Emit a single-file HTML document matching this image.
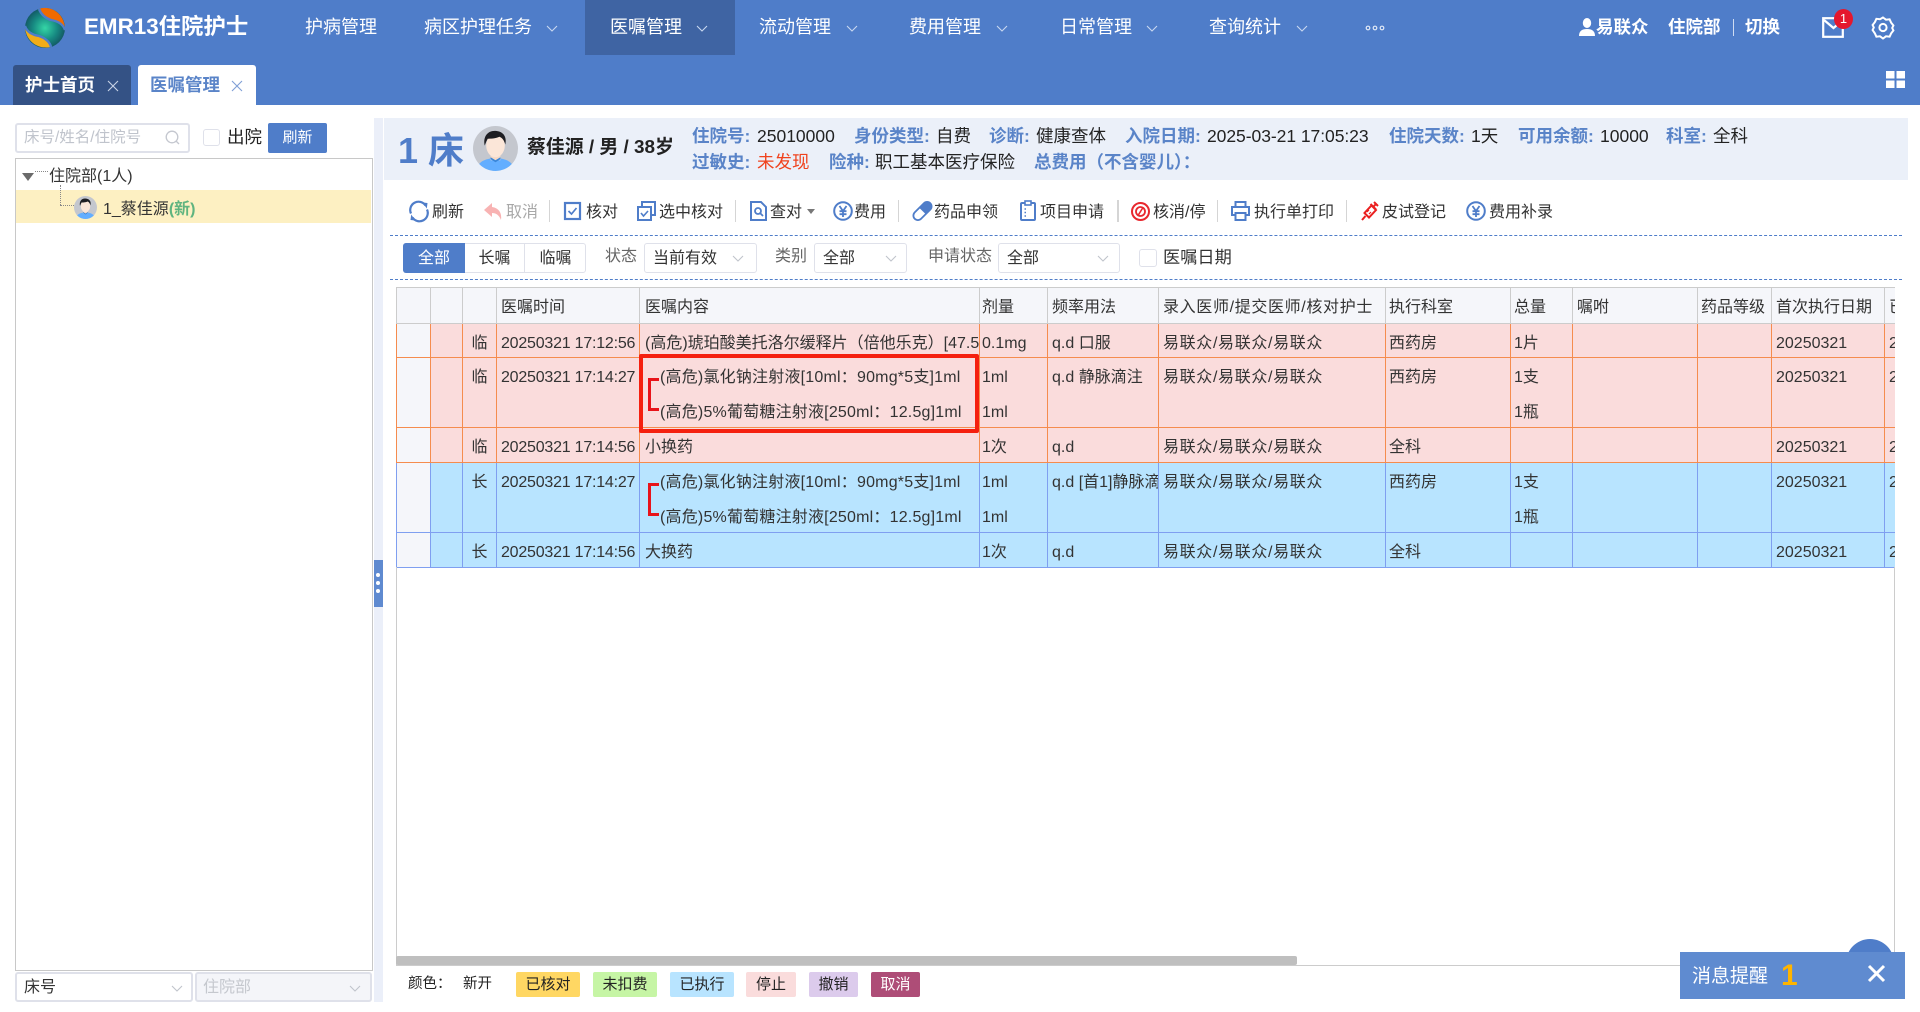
<!DOCTYPE html>
<html lang="zh-CN"><head><meta charset="utf-8"><title>EMR13住院护士 - 医嘱管理</title>
<style>
*{box-sizing:border-box}
html,body{margin:0;padding:0;width:1920px;height:1012px;overflow:hidden;background:#fff}
body{position:relative;font-family:"Liberation Sans","Noto Sans CJK SC",sans-serif;color:#333;font-size:16px}
.a{position:absolute}
.t{position:absolute;white-space:nowrap;line-height:20px;height:20px}
.i{position:absolute;overflow:visible}
.hdr{left:0;top:0;width:1920px;height:105px;background:#4f7dc9}
.nav{color:#fff;font-size:18px;top:17px}
.chev{position:absolute;width:12px;height:7px;color:#c9d8f0}
.sel{color:#c0c4cc}
.b{font-weight:bold}
.lab{font-weight:bold;color:#5a84c8;font-size:17.5px}
.val{color:#222;font-size:17.5px}
.tb{font-size:16px;color:#333;top:203px}
.dv{position:absolute;width:1px;height:22px;top:200px;background:#d5d5d5}
.box{position:absolute;border:1px solid #dfe1ea;border-radius:3px;background:#fff}
.dash{position:absolute;left:390px;width:1512px;height:0;border-top:1px dashed #4f7dc9}
#tw{position:absolute;left:396px;top:287px;width:1499px;height:282px;overflow:hidden}
table{border-collapse:collapse;table-layout:fixed;width:1499px;font-size:16px;color:#333}
th,td{padding:0 0 0 4px;overflow:hidden;white-space:nowrap;text-align:left;font-weight:normal;vertical-align:top}
th{height:36px;background:#f5f6fa;border:1px solid #ccc;line-height:40px}
th div{height:0;position:relative}
td div{height:0;line-height:35px;position:relative;top:2px}
td div.l2{top:37px}
th:nth-child(5),td:nth-child(5){padding-left:5px}
th:nth-child(6),td:nth-child(6){padding-left:2px}
th:nth-child(8),td:nth-child(8){letter-spacing:.65px}
th:nth-child(9),td:nth-child(9),th:nth-child(10),td:nth-child(10),th:nth-child(12),td:nth-child(12){padding-left:3px}
td.c{text-align:center;padding:0}
td.g{padding-left:20px;position:relative;letter-spacing:.2px}
td.f{background:#f5f6fa}
tr.p td{background:#fadcdc;border:1px solid #f58c4e}
tr.b1 td{background:#b8e4ff;border:1px solid #7f9ff0}
tr.p td.f,tr.b1 td.f{background:#f5f6fa}
.ts{letter-spacing:-.22px}
.br{position:absolute;left:8px;top:20px;width:11px;height:33px;border:3px solid #e8131a;border-right:none}
.lg{position:absolute;top:972px;height:25px;line-height:25px;text-align:center;font-size:15px;color:#222;border-radius:2px}
</style></head><body>
<svg width="0" height="0" style="position:absolute"><defs>
<symbol id="chev" viewBox="0 0 12 7"><polyline points="1,1 6,6 11,1" fill="none" stroke="currentColor" stroke-width="1.1"/></symbol>
<symbol id="yen" viewBox="0 0 20 20"><circle cx="10" cy="10" r="8.8" fill="none" stroke="#4f7dc9" stroke-width="2"/><path d="M6.500 5l3.500 5 3.500-5M6.500 10.200h7M6.500 13.200h7M10 10v6" fill="none" stroke="#4f7dc9" stroke-width="1.800"/></symbol>
<symbol id="av" viewBox="0 0 46 46"><clipPath id="cp"><circle cx="23" cy="23" r="23"/></clipPath><g clip-path="url(#cp)"><rect width="46" height="46" fill="#c4c7ce"/><path d="M4 46c0-9 8-13 19-13s19 4 19 13z" fill="#63aeff"/><rect x="18" y="26" width="10" height="9" fill="#f5d9c6"/><path d="M18 32l5 3 5-3v2l-5 3-5-3z" fill="#3a86d8"/><ellipse cx="23" cy="20" rx="9.500" ry="12" fill="#fbe6d8"/><path d="M12 20c-2-9 3-15 10-15 8 0 13 5 11 14-1-4-3-7-6-8-4 2-10 2-12 2-1 2-2 4-3 7z" fill="#1e1e22"/></g></symbol>
<radialGradient id="lg1" cx="50%" cy="50%" r="55%"><stop offset="0" stop-color="#35d6a6"/><stop offset=".55" stop-color="#178a82"/><stop offset="1" stop-color="#124f5e"/></radialGradient>
</defs></svg>

<div class="a hdr"></div>
<svg class="i" style="left:25px;top:8px" width="40" height="40" viewBox="0 0 40 40">
<circle cx="20" cy="20" r="20" fill="url(#lg1)"/>
<path d="M14 1C24-3 40 4 40 22 38 16 32 13 26 12 20 10 16 6 14 1z" fill="#f06a00"/>
<path d="M14 1c2 5 6 9 12 11 6 1 12 4 14 10" fill="none" stroke="#4f7dc9" stroke-width="2.4"/>
<path d="M0 18c0 14 12 24 26 21-1-5-6-9-12-11C8 27 2 24 0 18z" fill="#f2ac17"/>
<path d="M0 18c2 6 8 9 14 10 6 2 11 6 12 11" fill="none" stroke="#4f7dc9" stroke-width="2.4"/>
</svg>
<span class="t b" style="left:84px;top:17px;font-size:22.4px;color:#fff">EMR13住院护士</span>
<div class="a" style="left:585px;top:0;width:150px;height:55px;background:#3f64a3"></div>
<span class="t nav" style="left:305px">护病管理</span>
<span class="t nav" style="left:424px">病区护理任务</span><svg class="chev" style="left:546px;top:25px"><use href="#chev"/></svg>
<span class="t nav" style="left:610px">医嘱管理</span><svg class="chev" style="left:696px;top:25px"><use href="#chev"/></svg>
<span class="t nav" style="left:759px">流动管理</span><svg class="chev" style="left:846px;top:25px"><use href="#chev"/></svg>
<span class="t nav" style="left:909px">费用管理</span><svg class="chev" style="left:996px;top:25px"><use href="#chev"/></svg>
<span class="t nav" style="left:1060px">日常管理</span><svg class="chev" style="left:1146px;top:25px"><use href="#chev"/></svg>
<span class="t nav" style="left:1209px">查询统计</span><svg class="chev" style="left:1296px;top:25px"><use href="#chev"/></svg>
<svg class="i" style="left:1365px;top:25px" width="20" height="6"><g fill="none" stroke="#dfe8f6" stroke-width="1.2"><circle cx="3" cy="3" r="1.8"/><circle cx="10" cy="3" r="1.8"/><circle cx="17" cy="3" r="1.8"/></g></svg>
<svg class="i" style="left:1579px;top:18px" width="16" height="18" viewBox="0 0 16 18"><ellipse cx="8" cy="5" rx="4.2" ry="5" fill="#fff"/><path d="M0 18c0-5 3-7 8-7s8 2 8 7z" fill="#fff"/></svg>
<span class="t nav b" style="left:1596px;font-size:17.5px">易联众</span>
<span class="t nav b" style="left:1668px;font-size:17.5px">住院部</span>
<div class="a" style="left:1733px;top:19px;width:1px;height:17px;background:#cfdcf2"></div>
<span class="t nav b" style="left:1745px;font-size:17.5px">切换</span>
<svg class="i" style="left:1822px;top:17px" width="23" height="21" viewBox="0 0 23 21"><rect x="1.2" y="1.2" width="19.6" height="18.6" fill="none" stroke="#fff" stroke-width="2.2"/><path d="M2 3l9.500 8L21 3" fill="none" stroke="#fff" stroke-width="2.2"/></svg>
<div class="a" style="left:1834px;top:9px;width:19px;height:20px;border-radius:50%;background:#e5172d;color:#fff;font-size:13px;line-height:20px;text-align:center">1</div>
<svg class="i" style="left:1872px;top:16px" width="22" height="23" viewBox="0 0 22 23"><path d="M11 1.500l3 2.200 3.600-.4 1.500 3.300 2.300 2.900-1.200 2.500 1.200 2.500-2.300 2.900-1.500 3.300-3.600-.4-3 2.200-3-2.200-3.600.4-1.500-3.300L.6 14l1.200-2.500L.6 9l2.300-2.900 1.500-3.300 3.600.4z" fill="none" stroke="#fff" stroke-width="2"/><circle cx="11" cy="11.500" r="3.600" fill="none" stroke="#fff" stroke-width="2"/></svg>

<div class="a" style="left:13px;top:65px;width:118px;height:40px;background:#345285;border-radius:3px 3px 0 0"></div>
<span class="t b" style="left:25px;top:75px;font-size:17.5px;color:#fff">护士首页</span>
<svg class="i" style="left:107px;top:80px" width="12" height="12"><path d="M1 1l10 10M11 1L1 11" stroke="#c8d3e6" stroke-width="1.1"/></svg>
<div class="a" style="left:138px;top:65px;width:118px;height:40px;background:#fff;border-radius:3px 3px 0 0"></div>
<span class="t b" style="left:150px;top:75px;font-size:17.5px;color:#5a84c8">医嘱管理</span>
<svg class="i" style="left:231px;top:80px" width="12" height="12"><path d="M1 1l10 10M11 1L1 11" stroke="#7f9fd6" stroke-width="1.1"/></svg>
<svg class="i" style="left:1886px;top:71px" width="19" height="17"><g fill="#fff"><rect width="8.5" height="7.5"/><rect x="10.5" width="8.5" height="7.5"/><rect y="9.5" width="8.5" height="7.5"/><rect x="10.5" y="9.5" width="8.5" height="7.5"/></g></svg>

<!-- left panel -->
<div class="box" style="left:15px;top:123px;width:175px;height:30px;border-width:2px"></div>
<span class="t" style="left:24px;top:128px;font-size:15.5px;color:#c0c4cc">床号/姓名/住院号</span>
<svg class="i" style="left:165px;top:130px" width="15" height="15"><circle cx="7" cy="7" r="5.8" fill="none" stroke="#c4c7cf" stroke-width="1.3"/><path d="M11 11l3 3" stroke="#c4c7cf" stroke-width="1.3"/></svg>
<div class="box" style="left:203px;top:129px;width:17px;height:17px;border-width:1px"></div>
<span class="t" style="left:227px;top:127px;font-size:17.5px;color:#222">出院</span>
<div class="a" style="left:268px;top:123px;width:59px;height:30px;background:#4f7dc9;border-radius:2px;color:#fff;font-size:15px;line-height:30px;text-align:center">刷新</div>
<div class="a" style="left:15px;top:158px;width:358px;height:813px;border:1px solid #c8c8c8"></div>
<div class="a" style="left:16px;top:190px;width:355px;height:33px;background:#fdf0c2"></div>
<div class="a" style="left:22px;top:173px;width:0;height:0;border-left:6.5px solid transparent;border-right:6.5px solid transparent;border-top:8px solid #6b6b6b"></div>
<div class="a" style="left:35px;top:171px;width:13px;border-top:1px dotted #888"></div>
<div class="a" style="left:60px;top:185px;height:20px;border-left:1px dotted #888"></div>
<div class="a" style="left:60px;top:205px;width:14px;border-top:1px dotted #888"></div>
<span class="t" style="left:49px;top:167px;font-size:16px;color:#333">住院部(1人)</span>
<svg class="i" style="left:74px;top:196px" width="23" height="23"><use href="#av" width="23" height="23"/></svg>
<span class="t" style="left:103px;top:200px;font-size:16px;color:#333">1_蔡佳源<b style="color:#5fb47f">(新)</b></span>
<div class="box" style="left:15px;top:972px;width:178px;height:30px;border-width:2px"></div>
<span class="t" style="left:24px;top:978px;font-size:16px">床号</span>
<svg class="chev sel" style="left:171px;top:985px"><use href="#chev"/></svg>
<div class="box" style="left:195px;top:972px;width:177px;height:30px;background:#f4f5f9;border-width:2px"></div>
<span class="t" style="left:203px;top:978px;font-size:16px;color:#c5c8ce">住院部</span>
<svg class="chev sel" style="left:349px;top:985px"><use href="#chev"/></svg>
<div class="a" style="left:374px;top:118px;width:9px;height:884px;background:#ebeff9"></div>
<div class="a" style="left:374px;top:560px;width:9px;height:47px;background:#5f8ad0"></div>
<div class="a" style="left:376px;top:573px;width:4px;height:4px;border-radius:50%;background:#fff"></div>
<div class="a" style="left:376px;top:581px;width:4px;height:4px;border-radius:50%;background:#fff"></div>
<div class="a" style="left:376px;top:589px;width:4px;height:4px;border-radius:50%;background:#fff"></div>

<!-- patient header -->
<div class="a" style="left:384px;top:118px;width:1524px;height:62px;background:#ebf0f9"></div>
<span class="t b" style="left:398px;top:131px;height:40px;line-height:40px;font-size:36px;color:#4f7dc9">1 床</span>
<svg class="i" style="left:473px;top:126px" width="45" height="45"><use href="#av" width="45" height="45"/></svg>
<span class="t b" style="left:527px;top:138px;font-size:18.9px;color:#222">蔡佳源 / 男 / 38岁</span>
<span class="t lab" style="left:692px;top:126px">住院号:</span><span class="t val" style="left:757px;top:126px">25010000</span>
<span class="t lab" style="left:854px;top:126px">身份类型:</span><span class="t val" style="left:936px;top:126px">自费</span>
<span class="t lab" style="left:989px;top:126px">诊断:</span><span class="t val" style="left:1036px;top:126px">健康查体</span>
<span class="t lab" style="left:1125px;top:126px">入院日期:</span><span class="t val" style="left:1207px;top:126px;letter-spacing:-.05px">2025-03-21 17:05:23</span>
<span class="t lab" style="left:1389px;top:126px">住院天数:</span><span class="t val" style="left:1471px;top:126px">1天</span>
<span class="t lab" style="left:1518px;top:126px">可用余额:</span><span class="t val" style="left:1600px;top:126px">10000</span>
<span class="t lab" style="left:1666px;top:126px">科室:</span><span class="t val" style="left:1713px;top:126px">全科</span>
<span class="t lab" style="left:692px;top:152px">过敏史:</span><span class="t val" style="left:757px;top:152px;color:#f0431e">未发现</span>
<span class="t lab" style="left:829px;top:152px">险种:</span><span class="t val" style="left:875px;top:152px">职工基本医疗保险</span>
<span class="t lab" style="left:1034px;top:152px">总费用（不含婴儿）：</span>

<!-- toolbar -->
<svg class="i" style="left:409px;top:201px" width="20" height="21" viewBox="0 0 20 21"><path d="M16.500 4.500A8.300 8.300 0 0 0 2 12.500" fill="none" stroke="#4f7dc9" stroke-width="2.200"/><path d="M3.500 16.500A8.300 8.300 0 0 0 18 8.500" fill="none" stroke="#4f7dc9" stroke-width="2.200"/><path d="M13.500 1.500l5 .5-.7 5.500z" fill="#4f7dc9"/><path d="M6.500 19.500l-5-.5.700-5.500z" fill="#4f7dc9"/></svg>
<span class="t tb" style="left:432px">刷新</span>
<svg class="i" style="left:484px;top:203px" width="19" height="17" viewBox="0 0 19 17"><path d="M8 0L0 7l8 7v-4c4 0 7 2 9 7 1-7-2-12-9-13z" fill="#f8b3b3"/></svg>
<span class="t tb" style="left:506px;color:#a8a8a8">取消</span>
<div class="dv" style="left:549px"></div>
<svg class="i" style="left:564px;top:202px" width="17" height="18" viewBox="0 0 17 18"><rect x="1" y="1" width="15" height="16" fill="none" stroke="#4f7dc9" stroke-width="2.200"/><path d="M4.500 9l3 3 5-6" fill="none" stroke="#4f7dc9" stroke-width="1.700"/></svg>
<span class="t tb" style="left:586px">核对</span>
<svg class="i" style="left:637px;top:201px" width="19" height="20" viewBox="0 0 19 20"><path d="M5 5V1h13v13h-4" fill="none" stroke="#4f7dc9" stroke-width="2"/><rect x="1" y="6" width="13" height="13" fill="#fff" stroke="#4f7dc9" stroke-width="2"/><path d="M4 12l2.500 3 4.500-5" fill="none" stroke="#4f7dc9" stroke-width="1.600"/></svg>
<span class="t tb" style="left:659px">选中核对</span>
<div class="dv" style="left:735px"></div>
<svg class="i" style="left:750px;top:201px" width="17" height="20" viewBox="0 0 17 20"><path d="M1 1h10l5 5v13H1z" fill="none" stroke="#4f7dc9" stroke-width="2"/><circle cx="8" cy="10" r="3" fill="none" stroke="#4f7dc9" stroke-width="1.800"/><path d="M10 12l3 3" stroke="#4f7dc9" stroke-width="1.800"/></svg>
<span class="t tb" style="left:770px">查对</span>
<div class="a" style="left:807px;top:209px;width:0;height:0;border-left:4px solid transparent;border-right:4px solid transparent;border-top:5px solid #777"></div>
<svg class="i" style="left:833px;top:201px" width="20" height="20"><use href="#yen" width="20" height="20"/></svg>
<span class="t tb" style="left:854px">费用</span>
<div class="dv" style="left:898px"></div>
<svg class="i" style="left:913px;top:201px" width="19" height="20" viewBox="0 0 19 20"><g transform="rotate(45 9.500 10)"><rect x="5" y="-1" width="9" height="22" rx="4.500" fill="#fff" stroke="#4f7dc9" stroke-width="1.800"/><path d="M5 10V3.500a4.500 4.500 0 0 1 9 0V10z" fill="#4f7dc9"/></g></svg>
<span class="t tb" style="left:934px">药品申领</span>
<svg class="i" style="left:1020px;top:200px" width="16" height="21" viewBox="0 0 16 21"><rect x="1" y="3" width="14" height="17" rx="1" fill="none" stroke="#4f7dc9" stroke-width="2"/><rect x="5" y="1" width="6" height="4" fill="#fff" stroke="#4f7dc9" stroke-width="1.600"/><path d="M4.500 9h1.500M4.500 12.500h1.500M4.500 16h1.500" stroke="#4f7dc9" stroke-width="1.600"/></svg>
<span class="t tb" style="left:1040px">项目申请</span>
<div class="dv" style="left:1117px;width:2px"></div>
<svg class="i" style="left:1131px;top:202px" width="19" height="19" viewBox="0 0 19 19"><circle cx="9.500" cy="9.500" r="8.500" fill="none" stroke="#e8282e" stroke-width="2"/><circle cx="9.500" cy="9.500" r="4.500" fill="none" stroke="#e8282e" stroke-width="1.800"/><path d="M12 5.500l-5 8" stroke="#e8282e" stroke-width="1.600"/></svg>
<span class="t tb" style="left:1153px">核消/停</span>
<div class="dv" style="left:1217px"></div>
<svg class="i" style="left:1231px;top:201px" width="19" height="20" viewBox="0 0 19 20"><rect x="4.500" y="1" width="10" height="5" fill="none" stroke="#4f7dc9" stroke-width="2"/><path d="M4 14H1V6h17v8h-3" fill="none" stroke="#4f7dc9" stroke-width="2"/><rect x="4.500" y="12" width="10" height="7" fill="none" stroke="#4f7dc9" stroke-width="2"/></svg>
<span class="t tb" style="left:1254px">执行单打印</span>
<div class="dv" style="left:1346px"></div>
<svg class="i" style="left:1361px;top:201px" width="18" height="20" viewBox="0 0 18 20"><path d="M1 19l3.500-4M3.500 12l4.500 4.500L15 9l-4.500-4.500zM9.500 3l5.500 5.500M13 1l4 4M15 3l-2 2" fill="none" stroke="#ea2020" stroke-width="2"/><path d="M6 11l2-2M8 13l2-2" stroke="#ea2020" stroke-width="1.200"/></svg>
<span class="t tb" style="left:1382px">皮试登记</span>
<svg class="i" style="left:1466px;top:201px" width="20" height="20"><use href="#yen" width="20" height="20"/></svg>
<span class="t tb" style="left:1489px">费用补录</span>
<div class="dash" style="top:235px"></div>

<!-- filter -->
<div class="box" style="left:403px;top:243px;width:183px;height:30px"></div>
<div class="a" style="left:403px;top:243px;width:62px;height:30px;background:#4f7dc9;border-radius:3px 0 0 3px;color:#fff;line-height:32px;text-align:center">全部</div>
<div class="a" style="left:465px;top:243px;width:60px;height:30px;border-right:1px solid #dfe1ea;line-height:32px;text-align:center">长嘱</div>
<div class="a" style="left:525px;top:243px;width:61px;height:30px;line-height:32px;text-align:center">临嘱</div>
<span class="t" style="left:605px;top:247px;color:#666">状态</span>
<div class="box" style="left:644px;top:243px;width:113px;height:30px"></div><span class="t" style="left:653px;top:249px">当前有效</span><svg class="chev sel" style="left:732px;top:255px"><use href="#chev"/></svg>
<span class="t" style="left:775px;top:247px;color:#666">类别</span>
<div class="box" style="left:814px;top:243px;width:93px;height:30px"></div><span class="t" style="left:823px;top:249px">全部</span><svg class="chev sel" style="left:885px;top:255px"><use href="#chev"/></svg>
<span class="t" style="left:928px;top:247px;color:#666">申请状态</span>
<div class="box" style="left:998px;top:243px;width:122px;height:30px"></div><span class="t" style="left:1007px;top:249px">全部</span><svg class="chev sel" style="left:1097px;top:255px"><use href="#chev"/></svg>
<div class="box" style="left:1139px;top:249px;width:18px;height:18px"></div>
<span class="t" style="left:1163px;top:247px;font-size:17.2px">医嘱日期</span>
<div class="dash" style="top:279px"></div>

<!-- table -->
<div id="tw"><table>
<colgroup><col style="width:34px"><col style="width:32px"><col style="width:34px"><col style="width:143px"><col style="width:340px"><col style="width:68px"><col style="width:111px"><col style="width:227px"><col style="width:125px"><col style="width:62px"><col style="width:125px"><col style="width:74px"><col style="width:113px"><col style="width:11px"></colgroup>
<tr style="height:36px"><th></th><th></th><th></th><th><div>医嘱时间</div></th><th><div>医嘱内容</div></th><th><div>剂量</div></th><th><div>频率用法</div></th><th><div>录入医师/提交医师/核对护士</div></th><th><div>执行科室</div></th><th><div>总量</div></th><th><div>嘱咐</div></th><th><div>药品等级</div></th><th><div>首次执行日期</div></th><th><div>已</div></th></tr>
<tr class="p" style="height:34px"><td class="f"></td><td></td><td class="c"><div>临</div></td><td><div class="ts">20250321 17:12:56</div></td><td><div>(高危)琥珀酸美托洛尔缓释片（倍他乐克）[47.5mg*7片]1片</div></td><td><div>0.1mg</div></td><td><div>q.d 口服</div></td><td><div>易联众/易联众/易联众</div></td><td><div>西药房</div></td><td><div>1片</div></td><td></td><td></td><td><div>20250321</div></td><td><div>20250321</div></td></tr>
<tr class="p" style="height:70px"><td class="f"></td><td></td><td class="c"><div>临</div></td><td><div class="ts">20250321 17:14:27</div></td><td class="g"><span class="br"></span><div>(高危)氯化钠注射液[10ml：90mg*5支]1ml</div><div class="l2">(高危)5%葡萄糖注射液[250ml：12.5g]1ml</div></td><td><div>1ml</div><div class="l2">1ml</div></td><td><div>q.d 静脉滴注</div></td><td><div>易联众/易联众/易联众</div></td><td><div>西药房</div></td><td><div>1支</div><div class="l2">1瓶</div></td><td></td><td></td><td><div>20250321</div></td><td><div>20250321</div></td></tr>
<tr class="p" style="height:35px"><td class="f"></td><td></td><td class="c"><div>临</div></td><td><div class="ts">20250321 17:14:56</div></td><td><div>小换药</div></td><td><div>1次</div></td><td><div>q.d</div></td><td><div>易联众/易联众/易联众</div></td><td><div>全科</div></td><td></td><td></td><td></td><td><div>20250321</div></td><td><div>20250321</div></td></tr>
<tr class="b1" style="height:70px"><td class="f"></td><td></td><td class="c"><div>长</div></td><td><div class="ts">20250321 17:14:27</div></td><td class="g"><span class="br"></span><div>(高危)氯化钠注射液[10ml：90mg*5支]1ml</div><div class="l2">(高危)5%葡萄糖注射液[250ml：12.5g]1ml</div></td><td><div>1ml</div><div class="l2">1ml</div></td><td><div>q.d [首1]静脉滴注</div></td><td><div>易联众/易联众/易联众</div></td><td><div>西药房</div></td><td><div>1支</div><div class="l2">1瓶</div></td><td></td><td></td><td><div>20250321</div></td><td><div>20250321</div></td></tr>
<tr class="b1" style="height:35px"><td class="f"></td><td></td><td class="c"><div>长</div></td><td><div class="ts">20250321 17:14:56</div></td><td><div>大换药</div></td><td><div>1次</div></td><td><div>q.d</div></td><td><div>易联众/易联众/易联众</div></td><td><div>全科</div></td><td></td><td></td><td></td><td><div>20250321</div></td><td><div>20250321</div></td></tr>
</table></div>
<div class="a" style="left:639px;top:354px;width:340px;height:79px;border:4px solid #f5200f;border-radius:2px"></div>
<div class="a" style="left:396px;top:567px;width:1px;height:399px;background:#ccc"></div>
<div class="a" style="left:1894px;top:567px;width:1px;height:399px;background:#ccc"></div>
<div class="a" style="left:396px;top:965px;width:1499px;height:1px;background:#ccc"></div>
<div class="a" style="left:396px;top:956px;width:901px;height:9px;background:#bfbfbf;border-radius:2px"></div>

<!-- legend -->
<span class="t" style="left:408px;top:974px;font-size:14.5px;color:#222">颜色：</span>
<span class="t" style="left:463px;top:974px;font-size:14.5px;color:#222">新开</span>
<div class="lg" style="left:516px;width:64px;background:#ffd763">已核对</div>
<div class="lg" style="left:593px;width:64px;background:#c6f5a5">未扣费</div>
<div class="lg" style="left:670px;width:64px;background:#b8e4ff">已执行</div>
<div class="lg" style="left:746px;width:50px;background:#fadcdc">停止</div>
<div class="lg" style="left:809px;width:49px;background:#dccbec">撤销</div>
<div class="lg" style="left:871px;width:49px;background:#ae4d77;color:#fff">取消</div>

<!-- message -->
<div class="a" style="left:1846px;top:939px;width:48px;height:48px;border-radius:50%;background:#4f7dc9"></div>
<div class="a" style="left:1680px;top:952px;width:225px;height:47px;background:#5f8bd0"></div>
<span class="t" style="left:1692px;top:967px;font-size:19px;color:#fff">消息提醒</span>
<span class="t b" style="left:1781px;top:961px;height:30px;line-height:30px;font-size:30px;color:#ffb400">1</span>
<svg class="i" style="left:1867px;top:964px" width="19" height="19"><path d="M2 2l15 15M17 2L2 17" stroke="#fff" stroke-width="3"/></svg>
</body></html>
